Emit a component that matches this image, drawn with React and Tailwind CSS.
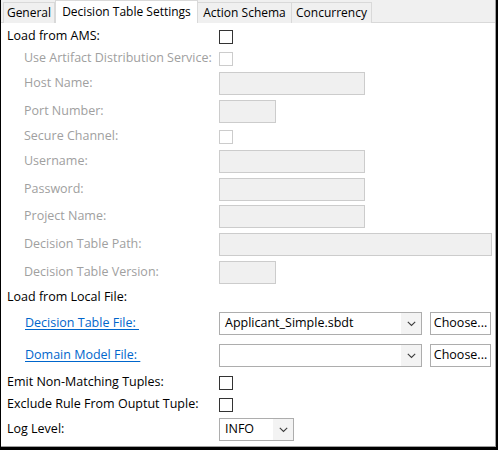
import React from "react";

const font = { fontFamily: '"Open Sans", "Noto Sans", sans-serif' };

function Chevron() {
  return (
    <svg width="9" height="6" viewBox="0 0 9 6" className="block">
      <polyline points="0.8,0.8 4.5,4.5 8.2,0.8" fill="none" stroke="#3c3c3c" strokeWidth="1.1" />
    </svg>
  );
}

function Check({ disabled }) {
  return (
    <div
      className={
        disabled
          ? "w-[14px] h-[14px] border border-[#cccccc] bg-white"
          : "w-[14px] h-[14px] border border-[#333333] bg-white"
      }
    />
  );
}

function DisabledInput({ w }) {
  return <div className={`${w} h-full border border-[#cccccc] bg-[#f0f0f0]`} />;
}

function Combo({ w, value }) {
  return (
    <div className={`${w} h-full border border-[#adadad] bg-white flex items-stretch`}>
      <div className="flex-1 flex items-center pl-[5px] text-[12.5px] text-black leading-none">{value}</div>
      <div className="w-[20px] flex items-center justify-center bg-[#f3f3f3]">
        <Chevron />
      </div>
    </div>
  );
}

function Button() {
  return (
    <div className="w-[61px] h-full border border-[#adadad] bg-white flex items-center justify-center text-[12.5px] text-black leading-none">
      Choose...
    </div>
  );
}

function Row({ cls, label, labelCls, children }) {
  return (
    <div className={`flex items-center ${cls}`}>
      <div className={`w-[212px] shrink-0 text-[12.5px] leading-none whitespace-nowrap ${labelCls}`}>{label}</div>
      <div className="flex items-center h-full gap-[8px]">{children}</div>
    </div>
  );
}

export default function App() {
  const dis = "pl-[17px] text-[#a0a0a0]";
  const link = "pl-[18px] text-[#0066cc] underline underline-offset-2";
  return (
    <div style={font} className="w-[498px] h-[450px] bg-white border-l border-r-2 border-b-[3px] border-black">
      <div className="w-full h-full border-r border-b border-[#a0a0a0] flex flex-col">
        <div className="h-[23px] flex items-end bg-[#f0f0f0] border-b border-[#d9d9d9] pl-[2px] relative">
          <div className="w-[52px] h-[21px] -mb-px border border-b-0 border-[#d9d9d9] bg-[#f0f0f0] flex items-center justify-center text-[12px] text-black leading-none">
            General
          </div>
          <div className="w-[143px] h-[23px] -mb-px border border-b-0 border-[#d9d9d9] bg-white flex items-center justify-center text-[12px] text-black leading-none">
            Decision Table Settings
          </div>
          <div className="w-[94px] h-[21px] -mb-px border border-l-0 border-b-0 border-[#d9d9d9] bg-[#f0f0f0] flex items-center justify-center text-[12px] text-black leading-none">
            Action Schema
          </div>
          <div className="w-[80px] h-[21px] -mb-px border border-l-0 border-b-0 border-[#d9d9d9] bg-[#f0f0f0] flex items-center justify-center text-[12px] text-black leading-none">
            Concurrency
          </div>
        </div>
        <div className="flex flex-col pl-[6px]">
          <Row cls="mt-[2px] h-[23px]" label="Load from AMS:" labelCls="text-black">
            <Check />
          </Row>
          <Row cls="h-[21px]" label="Use Artifact Distribution Service:" labelCls={dis}>
            <Check disabled />
          </Row>
          <Row cls="mt-[3px] h-[23px]" label="Host Name:" labelCls={dis}>
            <DisabledInput w="w-[146px]" />
          </Row>
          <Row cls="mt-[5px] h-[23px]" label="Port Number:" labelCls={dis}>
            <DisabledInput w="w-[57px]" />
          </Row>
          <Row cls="mt-[3px] h-[21px]" label="Secure Channel:" labelCls={dis}>
            <Check disabled />
          </Row>
          <Row cls="mt-[3px] h-[23px]" label="Username:" labelCls={dis}>
            <DisabledInput w="w-[146px]" />
          </Row>
          <Row cls="mt-[5px] h-[23px]" label="Password:" labelCls={dis}>
            <DisabledInput w="w-[146px]" />
          </Row>
          <Row cls="mt-[4px] h-[23px]" label="Project Name:" labelCls={dis}>
            <DisabledInput w="w-[146px]" />
          </Row>
          <Row cls="mt-[5px] h-[23px]" label="Decision Table Path:" labelCls={dis}>
            <DisabledInput w="w-[273px]" />
          </Row>
          <Row cls="mt-[5px] h-[23px]" label="Decision Table Version:" labelCls={dis}>
            <DisabledInput w="w-[57px]" />
          </Row>
          <Row cls="mt-[3px] h-[20px]" label="Load from Local File:" labelCls="text-black" />
          <Row cls="mt-[5px] h-[23px]" label={"Decision Table File:\u00a0"} labelCls={link}>
            <Combo w="w-[203px]" value="Applicant_Simple.sbdt" />
            <Button />
          </Row>
          <Row cls="mt-[9px] h-[23px]" label={"Domain Model File:\u00a0"} labelCls={link}>
            <Combo w="w-[203px]" value="" />
            <Button />
          </Row>
          <Row cls="mt-[5px] h-[21px]" label="Emit Non-Matching Tuples:" labelCls="text-black">
            <Check />
          </Row>
          <Row cls="mt-[1px] h-[21px]" label="Exclude Rule From Ouptut Tuple:" labelCls="text-black">
            <Check />
          </Row>
          <Row cls="mt-[3px] h-[23px]" label="Log Level:" labelCls="text-black">
            <Combo w="w-[75px]" value="INFO" />
          </Row>
        </div>
      </div>
    </div>
  );
}
